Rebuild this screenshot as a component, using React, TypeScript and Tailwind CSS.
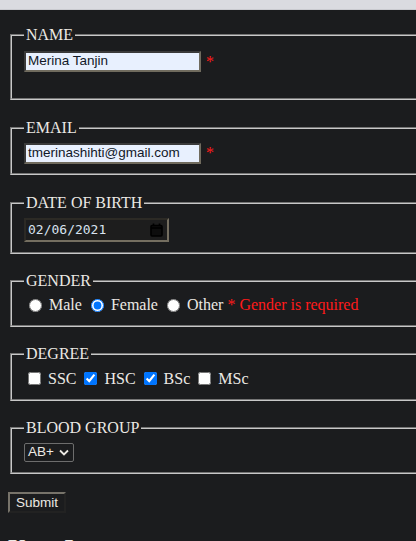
import React from 'react'

const serif = { fontFamily: '"Liberation Serif", "Times New Roman", serif' }

function Field({ label, children, bodyClass }: { label: string; children: React.ReactNode; bodyClass: string }) {
  return (
    <fieldset className="mx-[2px] w-[700px] border-2 [border-style:groove] border-[#c8c8c8] px-[12px] pt-[5px] pb-[10px]">
      <legend className="px-[2px] text-[16px] leading-[18px]">{label}</legend>
      <div className={bodyClass}>{children}</div>
    </fieldset>
  )
}

function TextBox({ value }: { value: string }) {
  return (
    <div className="inline-flex h-[21px] w-[177px] items-center border-2 border-t-[#3a3a3a] border-l-[#3a3a3a] border-r-[#706b5e] border-b-[#706b5e] bg-[#e8f0fe] px-[2px] font-['Liberation_Sans',Arial,sans-serif] text-[13.5px] text-[#111827]">
      {value}
    </div>
  )
}

export default function App() {
  return (
    <div className="h-[541px] w-[416px] overflow-hidden bg-[#1b1c1e] text-[#ece9e4]" style={serif}>
      <div className="h-[10px] border-b border-[#c9cacf] bg-[#dadbe0]" />

      <form className="pl-[8px] pt-[16px]">
        {/* Name */}
        <Field label="NAME" bodyClass="h-[39px] pt-[2px]">
          <div className="flex h-[21px] items-center gap-[5px]">
            <TextBox value="Merina Tanjin" />
            <span className="text-[#ff1a1a]">*</span>
          </div>
        </Field>

        {/* Email */}
        <div className="mt-[19px]" />
        <Field label="EMAIL" bodyClass="h-[20px] mt-[1px] flex items-center gap-[5px]">
          <TextBox value="tmerinashihti@gmail.com" />
          <span className="text-[#ff1a1a]">*</span>
        </Field>

        {/* Date of birth */}
        <div className="mt-[19px]" />
        <Field label="DATE OF BIRTH" bodyClass="h-[25px] pt-[1px]">
          <div className="flex h-[24px] w-[145px] items-center justify-between border-2 border-t-[#2c2a25] border-l-[#2c2a25] border-r-[#746e60] border-b-[#746e60] bg-[#1d1d1d] pr-[4px] pl-[2px] font-['DejaVu_Sans_Mono','Liberation_Mono',monospace] text-[13px] text-[#d8e2ef]">
            <span>02/06/2021</span>
            <svg width="13" height="14" viewBox="0 0 13 14">
              <rect x="1" y="2.5" width="11" height="10.5" rx="1" fill="#0d0d0d" stroke="#000" strokeWidth="1.6" />
              <line x1="1" y1="5" x2="12" y2="5" stroke="#000" strokeWidth="1.6" />
              <line x1="3.5" y1="0.5" x2="3.5" y2="3" stroke="#000" strokeWidth="1.6" />
              <line x1="9.5" y1="0.5" x2="9.5" y2="3" stroke="#000" strokeWidth="1.6" />
            </svg>
          </div>
        </Field>

        {/* Gender */}
        <div className="mt-[18px]" />
        <Field label="GENDER" bodyClass="h-[20px] flex items-center whitespace-pre">
          <input type="radio" name="g" className="m-0 ml-[5px] mr-[3px] h-[13px] w-[13px]" readOnly />
          <span> Male </span>
          <input type="radio" name="g" className="m-0 ml-[5px] mr-[3px] h-[13px] w-[13px]" defaultChecked />
          <span> Female </span>
          <input type="radio" name="g" className="m-0 ml-[5px] mr-[3px] h-[13px] w-[13px]" readOnly />
          <span> Other </span>
          <span className="text-[#ff1a1a]">* Gender is required</span>
        </Field>

        {/* Degree */}
        <div className="mt-[18px]" />
        <Field label="DEGREE" bodyClass="h-[21px] flex items-center whitespace-pre">
          <input type="checkbox" className="m-0 ml-[4px] mr-[3px] h-[13px] w-[13px]" readOnly />
          <span> SSC </span>
          <input type="checkbox" className="m-0 ml-[4px] mr-[3px] h-[13px] w-[13px]" defaultChecked />
          <span> HSC </span>
          <input type="checkbox" className="m-0 ml-[4px] mr-[3px] h-[13px] w-[13px]" defaultChecked />
          <span> BSc </span>
          <input type="checkbox" className="m-0 ml-[4px] mr-[3px] h-[13px] w-[13px]" readOnly />
          <span> MSc</span>
        </Field>

        {/* Blood group */}
        <div className="mt-[18px]" />
        <Field label="BLOOD GROUP" bodyClass="h-[20px] flex items-center">
          <div className="flex h-[19px] w-[50px] items-center gap-[5px] rounded-[2px] border border-[#6d6d6d] bg-[#1b1c1e] pl-[3px] font-['Liberation_Sans',Arial,sans-serif] text-[13.5px] text-[#ece9e4]">
            <span>AB+</span>
            <svg width="10" height="7" viewBox="0 0 10 7">
              <path d="M1 1.5 L5 5.5 L9 1.5" fill="none" stroke="#ece9e4" strokeWidth="1.8" />
            </svg>
          </div>
        </Field>

        <button
          type="button"
          className="mt-[18px] h-[21px] w-[58px] border-2 border-t-[#77736a] border-l-[#77736a] border-r-[#222] border-b-[#222] bg-[#1b1c1e] font-['Liberation_Sans',Arial,sans-serif] text-[13.5px] leading-[15px] text-[#ece9e4]"
        >
          Submit
        </button>

        <h2 className="mt-[19px] text-[24px] font-bold leading-[28px]">Your Input</h2>
      </form>
    </div>
  )
}
